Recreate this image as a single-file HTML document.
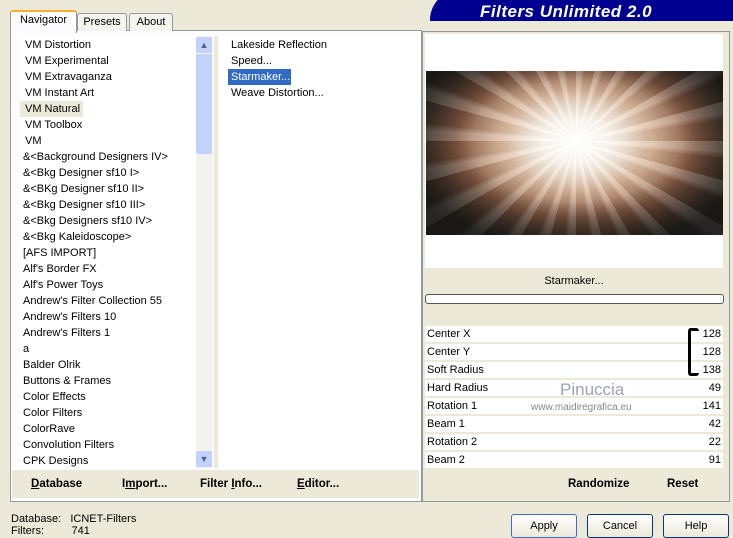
<!DOCTYPE html><html><head><style>
body{margin:0;width:733px;height:535px;background:#ece9d8;font-family:"Liberation Sans",sans-serif;font-size:11px;color:#000;position:relative;overflow:hidden}
.a{position:absolute}
.tab{position:absolute;top:13px;height:17px;border:1px solid #919b9c;border-bottom:none;background:#f4f3ee;text-align:center;line-height:17px;font-size:11px;border-radius:3px 3px 0 0}
.list div{height:16px;line-height:16px;padding-left:3px;white-space:nowrap}
.row{position:absolute;left:425px;width:298px;height:16px;background:#fff;line-height:16px;font-size:11px}
.row span{position:absolute;right:2px}
.row b{font-weight:normal;padding-left:2px}
.btn{position:absolute;top:514px;height:22px;width:64px;border:1px solid #003c74;border-radius:3px;background:linear-gradient(#fff,#ece9d8);text-align:center;line-height:22px;font-size:11px}
.bb{position:absolute;font-weight:bold;font-size:11.5px;top:478px}
</style></head><body>
<div class="a" style="left:430px;top:-10px;width:310px;height:31px;background:#000090;border-radius:30px 0 0 0"></div>
<div class="a" style="left:480px;top:2px;color:#fff;font-style:italic;font-weight:bold;font-size:17px;letter-spacing:.5px">Filters Unlimited 2.0</div>
<div class="a" style="left:10px;top:30px;width:410px;height:470px;border:1px solid #919b9c;background:#fcfcfe"></div>
<div class="tab" style="left:10px;top:10px;height:21px;width:65px;background:#fcfcfe;border-top:2px solid #f8b030">Navigator</div>
<div class="tab" style="left:77px;width:48px">Presets</div>
<div class="tab" style="left:129px;width:42px">About</div>
<div class="a" style="left:20px;top:36px;width:176px;height:432px;background:#fff;overflow:hidden"><div class="list" style="font-size:11px;padding-top:1px">
<div style="padding-left:5px">VM Distortion</div><div style="padding-left:5px">VM Experimental</div><div style="padding-left:5px">VM Extravaganza</div><div style="padding-left:5px">VM Instant Art</div><div style="padding-left:5px;background:#ece9d8;width:58px">VM Natural</div><div style="padding-left:5px">VM Toolbox</div><div style="padding-left:5px">VM</div><div>&amp;&lt;Background Designers IV&gt;</div><div>&amp;&lt;Bkg Designer sf10 I&gt;</div><div>&amp;&lt;BKg Designer sf10 II&gt;</div><div>&amp;&lt;Bkg Designer sf10 III&gt;</div><div>&amp;&lt;Bkg Designers sf10 IV&gt;</div><div>&amp;&lt;Bkg Kaleidoscope&gt;</div><div>[AFS IMPORT]</div><div>Alf's Border FX</div><div>Alf's Power Toys</div><div>Andrew's Filter Collection 55</div><div>Andrew's Filters 10</div><div>Andrew's Filters 1</div><div>a</div><div>Balder Olrik</div><div>Buttons &amp; Frames</div><div>Color Effects</div><div>Color Filters</div><div>ColorRave</div><div>Convolution Filters</div><div>CPK Designs</div></div></div>
<div class="a" style="left:196px;top:36px;width:17px;height:432px;background:#f3f2ee"></div>
<div class="a" style="left:196px;top:37px;width:16px;height:16px;background:#c1d3fb;border-radius:2px;text-align:center;font-size:9px;line-height:16px;color:#4d6185">▲</div>
<div class="a" style="left:196px;top:54px;width:16px;height:100px;background:#c1d3fb;border-radius:2px"></div>
<div class="a" style="left:196px;top:451px;width:16px;height:16px;background:#c1d3fb;border-radius:2px;text-align:center;font-size:9px;line-height:16px;color:#4d6185">▼</div>
<div class="a" style="left:214px;top:36px;width:4px;height:432px;background:#ece9d8"></div>
<div class="a" style="left:218px;top:36px;width:201px;height:432px;background:#fff"><div class="list" style="font-size:11px;padding-left:10px;padding-top:1px"><div>Lakeside Reflection</div><div>Speed...</div><div style="background:#316ac5;color:#fff;width:60px">Starmaker...</div><div>Weave Distortion...</div></div></div>
<div class="a" style="left:12px;top:470px;width:407px;height:28px;background:#ece9d8"></div>
<div class="bb" style="left:31px"><u>D</u>atabase</div><div class="bb" style="left:122px">I<u>m</u>port...</div><div class="bb" style="left:200px">Filter <u>I</u>nfo...</div><div class="bb" style="left:297px"><u>E</u>ditor...</div>
<div class="a" style="left:422px;top:31px;width:306px;height:469px;border:1px solid #919b9c;background:#ece9d8"></div>
<div class="a" style="left:425px;top:34px;width:298px;height:234px;background:#fff"></div>
<div class="a" style="left:426px;top:71px;width:297px;height:164px;background:radial-gradient(ellipse 170px 110px at 150px 70px,#fff 0%,#f7eee0 20%,#d9b79b 45%,#8a5c44 70%,#2a2420 100%),#3a2a20;overflow:hidden">
<div class="a" style="left:0;top:0;width:297px;height:164px;background:repeating-conic-gradient(from 0deg at 150px 70px,rgba(255,255,255,.25) 0deg 4deg,rgba(0,0,0,.05) 7deg 15deg)"></div>
<div class="a" style="left:0;top:0;width:297px;height:164px;background:radial-gradient(ellipse 70px 50px at 150px 70px,rgba(255,255,255,.9),rgba(255,255,255,0))"></div>
<div class="a" style="left:0;top:0;width:297px;height:164px;background:radial-gradient(ellipse 190px 110px at 150px 70px,rgba(255,255,255,0) 55%,rgba(20,20,18,.75) 100%)"></div></div>
<div class="a" style="left:425px;top:272px;width:298px;text-align:center;font-size:11px;line-height:18px">Starmaker...</div>
<div class="a" style="left:425px;top:294px;width:297px;height:8px;border:1px solid #555;border-radius:3px;background:#fff"></div>
<div class="row" style="top:326px"><b>Center X</b><span>128</span></div>
<div class="row" style="top:344px"><b>Center Y</b><span>128</span></div>
<div class="row" style="top:362px"><b>Soft Radius</b><span>138</span></div>
<div class="row" style="top:380px"><b>Hard Radius</b><span>49</span></div>
<div class="row" style="top:398px"><b>Rotation 1</b><span>141</span></div>
<div class="row" style="top:416px"><b>Beam 1</b><span>42</span></div>
<div class="row" style="top:434px"><b>Rotation 2</b><span>22</span></div>
<div class="row" style="top:452px"><b>Beam 2</b><span>91</span></div>
<div class="a" style="left:688px;top:328px;width:8px;height:42px;border:3px solid #000;border-right:none;border-radius:3px"></div>
<div class="a" style="left:560px;top:380px;color:#a0a0b8;font-size:17px">Pinuccia</div>
<div class="a" style="left:531px;top:402px;color:#888;font-size:10px">www.maidiregrafica.eu</div>
<div class="bb" style="left:568px">Randomize</div><div class="bb" style="left:667px">Reset</div>
<div class="a" style="left:11px;top:513px;line-height:12px">Database:&nbsp;&nbsp; ICNET-Filters<br>Filters:&nbsp;&nbsp;&nbsp;&nbsp;&nbsp;&nbsp;&nbsp;&nbsp; 741</div>
<div class="btn" style="left:511px;border-color:#3c6ed0">Apply</div><div class="btn" style="left:587px">Cancel</div><div class="btn" style="left:663px">Help</div>
</body></html>
